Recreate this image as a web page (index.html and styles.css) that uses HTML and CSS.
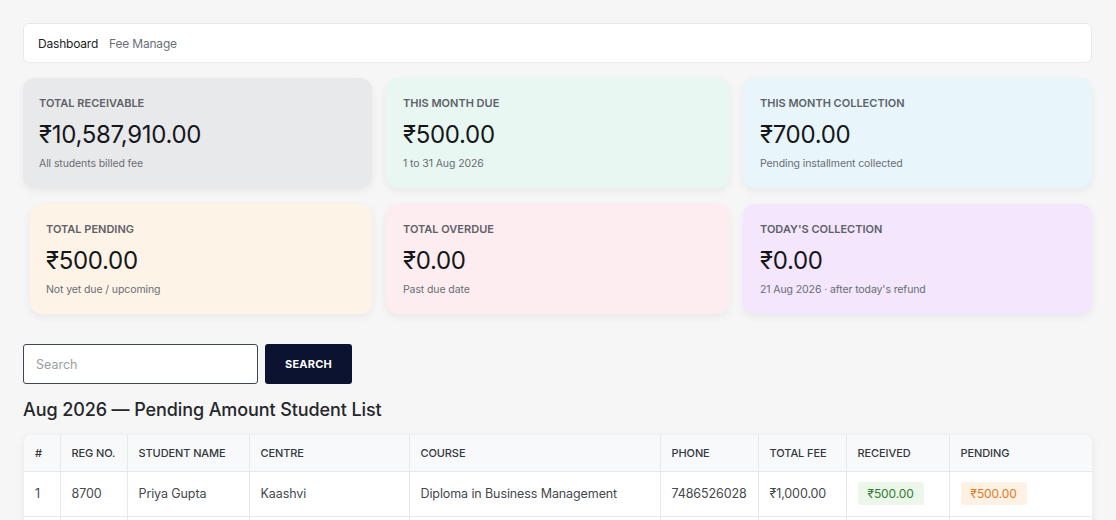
FILE: index.html
```html
<!DOCTYPE html>
<html lang="en">
<head>
<meta charset="utf-8">
<title>Fee Manage</title>
<link rel="stylesheet" href="styles.css">
</head>
<body>
<div class="page">
  <nav class="crumbs">
    <span class="crumb-active">Dashboard</span>
    <span class="crumb">Fee Manage</span>
  </nav>

  <section class="stats">
    <div class="card c-gray">
      <div class="label">TOTAL RECEIVABLE</div>
      <div class="value">₹10,587,910.00</div>
      <div class="sub">All students billed fee</div>
    </div>
    <div class="card c-mint">
      <div class="label">THIS MONTH DUE</div>
      <div class="value">₹500.00</div>
      <div class="sub">1 to 31 Aug 2026</div>
    </div>
    <div class="card c-sky">
      <div class="label">THIS MONTH COLLECTION</div>
      <div class="value">₹700.00</div>
      <div class="sub">Pending installment collected</div>
    </div>
    <div class="card c-peach shifted">
      <div class="label">TOTAL PENDING</div>
      <div class="value">₹500.00</div>
      <div class="sub">Not yet due / upcoming</div>
    </div>
    <div class="card c-rose">
      <div class="label">TOTAL OVERDUE</div>
      <div class="value">₹0.00</div>
      <div class="sub">Past due date</div>
    </div>
    <div class="card c-lilac">
      <div class="label">TODAY'S COLLECTION</div>
      <div class="value">₹0.00</div>
      <div class="sub">21 Aug 2026 · after today's refund</div>
    </div>
  </section>

  <form class="search">
    <input class="search-input" type="text" placeholder="Search">
    <button class="search-btn" type="button">SEARCH</button>
  </form>

  <h2 class="title">Aug 2026 — Pending Amount Student List</h2>

  <div class="table-wrap">
    <table class="list">
      <colgroup>
        <col class="w-num"><col class="w-reg"><col class="w-name"><col class="w-centre"><col class="w-course"><col class="w-phone"><col class="w-total"><col class="w-rec"><col class="w-pend">
      </colgroup>
      <thead>
        <tr>
          <th>#</th><th>REG NO.</th><th>STUDENT NAME</th><th>CENTRE</th><th>COURSE</th><th>PHONE</th><th>TOTAL FEE</th><th>RECEIVED</th><th>PENDING</th>
        </tr>
      </thead>
      <tbody>
        <tr>
          <td>1</td><td>8700</td><td>Priya Gupta</td><td>Kaashvi</td><td>Diploma in Business Management</td><td>7486526028</td><td>₹1,000.00</td>
          <td><span class="badge b-green">₹500.00</span></td>
          <td><span class="badge b-orange">₹500.00</span></td>
        </tr>
        <tr class="ghost">
          <td></td><td></td><td></td><td></td><td></td><td></td><td></td><td></td><td></td>
        </tr>
      </tbody>
    </table>
  </div>
</div>
</body>
</html>
```

FILE: styles.css
```css
* { box-sizing: border-box; }
html, body { margin: 0; padding: 0; }
body {
  background: #f6f6f6;
  font-family: "Inter", "Noto Sans", "DejaVu Sans", sans-serif;
  color: #222;
  width: 1116px;
  height: 520px;
  overflow: hidden;
}
.page {
  padding: 23px 24px 0 23px;
}
.crumbs {
  height: 40px;
  background: #fff;
  border: 1px solid #e6e9ee;
  border-radius: 6px;
  display: flex;
  align-items: center;
  gap: 11px;
  padding: 0 14px;
  font-size: 12px;
  letter-spacing: -0.2px;
}
.crumb-active { color: #222; }
.crumb { color: #6b6f76; }

.stats {
  margin-top: 15px;
  display: grid;
  grid-template-columns: 349px 343px 349px;
  column-gap: 14px;
  row-gap: 16px;
}
.card {
  height: 110px;
  border-radius: 12px;
  padding: 18px 16px 0 16px;
  box-shadow: 0 3px 8px rgba(0,0,0,0.06);
}
.card:nth-child(2), .card:nth-child(3), .card:nth-child(5), .card:nth-child(6) { padding-left: 17px; }
.shifted { margin-left: 7px; }
.c-gray { background: #e8e9eb; }
.c-mint { background: #e8f7f1; }
.c-sky { background: #e8f5fb; }
.c-peach { background: #fdf3e7; }
.c-rose { background: #fdedf0; }
.c-lilac { background: #f3e6fd; }
.label {
  font-size: 11px;
  font-weight: 600;
  color: #5e6167;
  line-height: 14px;
}
.value {
  margin-top: 10px;
  font-size: 24px;
  font-weight: 400;
  color: #15171a;
  line-height: 30px;
  letter-spacing: -0.3px;
}
.sub {
  margin-top: 7px;
  font-size: 10.5px;
  color: #6a6d73;
  line-height: 14px;
  letter-spacing: -0.1px;
}

.search {
  margin-top: 30px;
  display: flex;
  gap: 7px;
}
.search-input {
  width: 235px;
  height: 40px;
  border: 1px solid #3f4656;
  border-radius: 3px;
  background: #fff;
  padding: 0 12px;
  font-family: inherit;
  font-size: 12.5px;
  color: #222;
  outline: none;
}
.search-input::placeholder { color: #9a9ea5; }
.search-btn {
  width: 87px;
  height: 40px;
  border: 0;
  border-radius: 3px;
  background: #0b1330;
  color: #fff;
  font-family: inherit;
  font-size: 11px;
  font-weight: 700;
  letter-spacing: 0.2px;
}

.title {
  margin: 14px 0 0 0;
  font-size: 18px;
  font-weight: 500;
  color: #25272b;
  line-height: 24px;
  letter-spacing: -0.1px;
}

.table-wrap {
  margin-top: 13px;
  margin-left: 1px;
  background: #fff;
  border-radius: 8px 8px 0 0;
  box-shadow: 0 2px 8px rgba(0,0,0,0.07);
  overflow: hidden;
}
.list {
  width: 100%;
  border-collapse: collapse;
  table-layout: fixed;
  font-size: 12.5px;
}
.w-num { width: 36px; }
.w-reg { width: 67px; }
.w-name { width: 122px; }
.w-centre { width: 160px; }
.w-course { width: 251px; }
.w-phone { width: 98px; }
.w-total { width: 88px; }
.w-rec { width: 103px; }
.w-pend { width: 143px; }
.list th, .list td {
  border: 1.5px solid #e7e8ea;
  text-align: left;
  white-space: nowrap;
  padding: 0 11px;
}
.list tr > :first-child { border-left: 0; }
.list tr > :last-child { border-right: 0; }
.list thead th { border-top: 0; }
.list th {
  height: 36px;
  background: #f8f9fb;
  font-size: 11px;
  font-weight: 500;
  color: #34373c;
  letter-spacing: -0.1px;
}
.list td {
  height: 45px;
  color: #45484d;
  letter-spacing: -0.1px;
}
.ghost td { height: 20px; }
.badge {
  display: inline-block;
  padding: 4px 10px;
  border-radius: 3px;
  font-size: 12px;
  line-height: 15px;
}
.b-green { background: #ecf6ea; color: #2e7d32; }
.b-orange { background: #fff2e4; color: #e07b1c; }
```
